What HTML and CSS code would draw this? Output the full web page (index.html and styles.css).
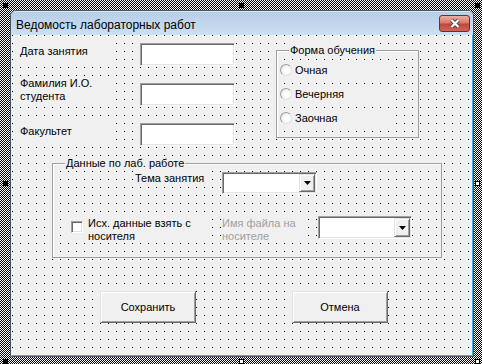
FILE: index.html
```html
<!DOCTYPE html>
<html>
<head>
    <title>Ведомость лабораторных работ</title>
    <link rel="stylesheet" href="styles.css">
</head>
<body>
    <div class="stage">
        <span class="handle h-tl"></span>
        <span class="handle h-tm"></span>
        <span class="handle h-tr"></span>
        <span class="handle h-ml"></span>
        <span class="handle open h-mr"></span>
        <span class="handle h-bl"></span>
        <span class="handle open h-bm"></span>
        <span class="handle open h-br"></span>

        <div class="window">
            <div class="titlebar">
                <span class="title">Ведомость лабораторных работ</span>
                <span class="close">
                    <svg width="12" height="11" viewBox="0 0 12 11">
                        <path d="M2.5 2 L9.5 9 M9.5 2 L2.5 9" stroke="#5b4441" stroke-width="4.2"/>
                        <path d="M2.5 2 L9.5 9 M9.5 2 L2.5 9" stroke="#fff" stroke-width="2.2"/>
                    </svg>
                </span>
            </div>

            <div class="client">
                <div class="lbl lbl-date">Дата занятия</div>
                <div class="textbox tb-date"></div>

                <div class="lbl lbl-name">Фамилия И.О.<br>студента</div>
                <div class="textbox tb-name"></div>

                <div class="lbl lbl-fac">Факультет</div>
                <div class="textbox tb-fac"></div>

                <div class="frame frame-form">
                    <span class="caption">Форма обучения</span>
                    <div class="opt"><span class="radio"></span>Очная</div>
                    <div class="opt"><span class="radio"></span>Вечерняя</div>
                    <div class="opt"><span class="radio"></span>Заочная</div>
                </div>

                <div class="frame frame-lab">
                    <span class="caption">Данные по лаб. работе</span>
                    <div class="lbl lbl-topic">Тема занятия</div>
                    <div class="textbox combo combo-topic">
                        <span class="drop"><svg width="7" height="4" viewBox="0 0 7 4"><polygon points="0,0 7,0 3.5,4" fill="#000"/></svg></span>
                    </div>
                    <div class="check">
                        <span class="box"></span>
                        <span>Исх. данные взять с<br>носителя</span>
                    </div>
                    <div class="lbl lbl-file">Имя файла на<br>носителе</div>
                    <div class="textbox combo combo-file">
                        <span class="drop"><svg width="7" height="4" viewBox="0 0 7 4"><polygon points="0,0 7,0 3.5,4" fill="#000"/></svg></span>
                    </div>
                </div>

                <div class="btn btn-save">Сохранить</div>
                <div class="btn btn-cancel">Отмена</div>
            </div>
        </div>
    </div>
</body>
</html>
```

FILE: styles.css
```css
body {
    margin: 0;
    font-family: "Liberation Sans", Arial, sans-serif;
    font-size: 11px;
    color: #000;
}

/* штриховая рамка выделения формы */
.stage {
    position: relative;
    width: 482px;
    height: 364px;
    box-sizing: border-box;
    padding: 10px 8px 7px 10px;
    background: repeating-conic-gradient(#000 0 25%, #fff 0 50%) 0 0 / 2px 2px;
}
.handle {
    position: absolute;
    width: 5px;
    height: 5px;
    background: #000;
}
.handle.open {
    background: #fff;
    box-shadow: inset 0 0 0 1px #000;
}
.h-tl { left: 3px; top: 3px; }
.h-tm { left: 239px; top: 3px; }
.h-tr { left: 475px; top: 3px; }
.h-ml { left: 3px; top: 181px; }
.h-mr { left: 475px; top: 181px; }
.h-bl { left: 3px; top: 359px; }
.h-bm { left: 239px; top: 359px; }
.h-br { left: 475px; top: 359px; }

/* окно формы */
.window {
    height: 100%;
    box-sizing: border-box;
    border: 1px solid #4a5866;
    border-radius: 6px 6px 0 0;
    display: flex;
    flex-direction: column;
    overflow: hidden;
    background: #c6d9ee;
}
.titlebar {
    height: 24px;
    flex: none;
    display: flex;
    justify-content: space-between;
    align-items: flex-start;
    padding-left: 5px;
    background: linear-gradient(#b6cee8, #cddff1);
    box-shadow: inset 0 1px rgba(255, 255, 255, 0.5);
}
.title {
    font-size: 12px;
    line-height: 14px;
    margin-top: 7px;
}
.close {
    width: 31px;
    height: 17px;
    margin: 4px 3px 0 0;
    box-sizing: border-box;
    border: 1px solid #7b2a22;
    border-radius: 3px;
    background: linear-gradient(#eab0a4, #d8796b 45%, #c2463a 55%, #cf6658);
    display: flex;
    align-items: center;
    justify-content: center;
}

/* рабочая область с сеткой точек */
.client {
    flex: 1;
    position: relative;
    border-left: 1px solid #e6eef7;
    border-right: 1px solid #33b5e0;
    border-bottom: 1px solid #33b5e0;
    background-color: #000;
    background-image:
        linear-gradient(to right, transparent 1px, #f0f0f0 1px),
        linear-gradient(to bottom, transparent 1px, #f0f0f0 1px);
    background-size: 8px 8px;
}

.lbl {
    position: absolute;
    background: #f0f0f0;
    line-height: 13px;
    box-sizing: border-box;
}
.lbl-date { left: 8px; top: 8px; width: 92px; height: 19px; padding-top: 2px; }
.lbl-name { left: 8px; top: 42px; width: 92px; height: 30px; }
.lbl-fac { left: 8px; top: 88px; width: 92px; height: 18px; padding-top: 2px; }

.textbox {
    position: absolute;
    width: 95px;
    height: 23px;
    box-sizing: border-box;
    background: #fff;
    border: 1px solid;
    border-color: #a0a0a0 #fff #fff #a0a0a0;
    box-shadow: inset 1px 1px #696969, inset -1px -1px #e3e3e3;
}
.tb-date { left: 128px; top: 8px; }
.tb-name { left: 128px; top: 48px; }
.tb-fac { left: 128px; top: 88px; }

.combo {
    display: flex;
    justify-content: flex-end;
    padding: 1px;
}
.drop {
    width: 16px;
    box-sizing: border-box;
    background: #f0f0f0;
    border: 1px solid;
    border-color: #e3e3e3 #696969 #696969 #e3e3e3;
    box-shadow: inset 1px 1px #fff, inset -1px -1px #a0a0a0;
    display: flex;
    align-items: center;
    justify-content: center;
}
.drop svg {
    display: block;
}

/* рамки */
.frame {
    position: absolute;
    box-sizing: border-box;
    border: 1px solid #a0a0a0;
    box-shadow: inset 1px 1px #fff;
}
.caption {
    position: absolute;
    top: -8px;
    left: 12px;
    padding: 0 1px;
    line-height: 14px;
    white-space: nowrap;
    background: #f0f0f0;
}
.frame-form {
    left: 264px;
    top: 15px;
    width: 143px;
    height: 88px;
    padding: 10px 0 0 3px;
    display: flex;
    flex-direction: column;
    gap: 6px;
}
.opt {
    display: flex;
    align-items: center;
    width: 110px;
    height: 18px;
    background: #f0f0f0;
}
.radio {
    width: 12px;
    height: 12px;
    margin-right: 3px;
    box-sizing: border-box;
    border-radius: 50%;
    border: 1px solid;
    border-color: #9a9a9a #e3e3e3 #e3e3e3 #9a9a9a;
    background: radial-gradient(circle at 60% 60%, #fff 30%, #e2e2e2);
}

.frame-lab {
    left: 40px;
    top: 128px;
    width: 390px;
    height: 95px;
}
.lbl-topic { left: 82px; top: 7px; width: 72px; height: 15px; line-height: 14px; }
.combo-topic { left: 169px; top: 8px; height: 22px; }
.check {
    position: absolute;
    left: 15px;
    top: 53px;
    width: 142px;
    height: 26px;
    display: flex;
    align-items: flex-start;
    line-height: 13px;
    background: #f0f0f0;
}
.box {
    width: 12px;
    height: 12px;
    margin: 4px 5px 0 3px;
    flex: none;
    box-sizing: border-box;
    background: #fff;
    border: 1px solid;
    border-color: #a0a0a0 #fff #fff #a0a0a0;
    box-shadow: inset 1px 1px #696969, inset -1px -1px #e3e3e3;
}
.lbl-file { left: 169px; top: 53px; width: 80px; height: 26px; color: #a0a0a0; }
.combo-file { left: 265px; top: 52px; width: 94px; }

/* кнопки */
.btn {
    position: absolute;
    top: 256px;
    width: 96px;
    height: 32px;
    box-sizing: border-box;
    background: #f0f0f0;
    border: 1px solid;
    border-color: #e3e3e3 #696969 #696969 #e3e3e3;
    box-shadow: inset 1px 1px #fff, inset -1px -1px #a0a0a0;
    display: flex;
    align-items: center;
    justify-content: center;
}
.btn-save { left: 88px; }
.btn-cancel { left: 280px; }
```
